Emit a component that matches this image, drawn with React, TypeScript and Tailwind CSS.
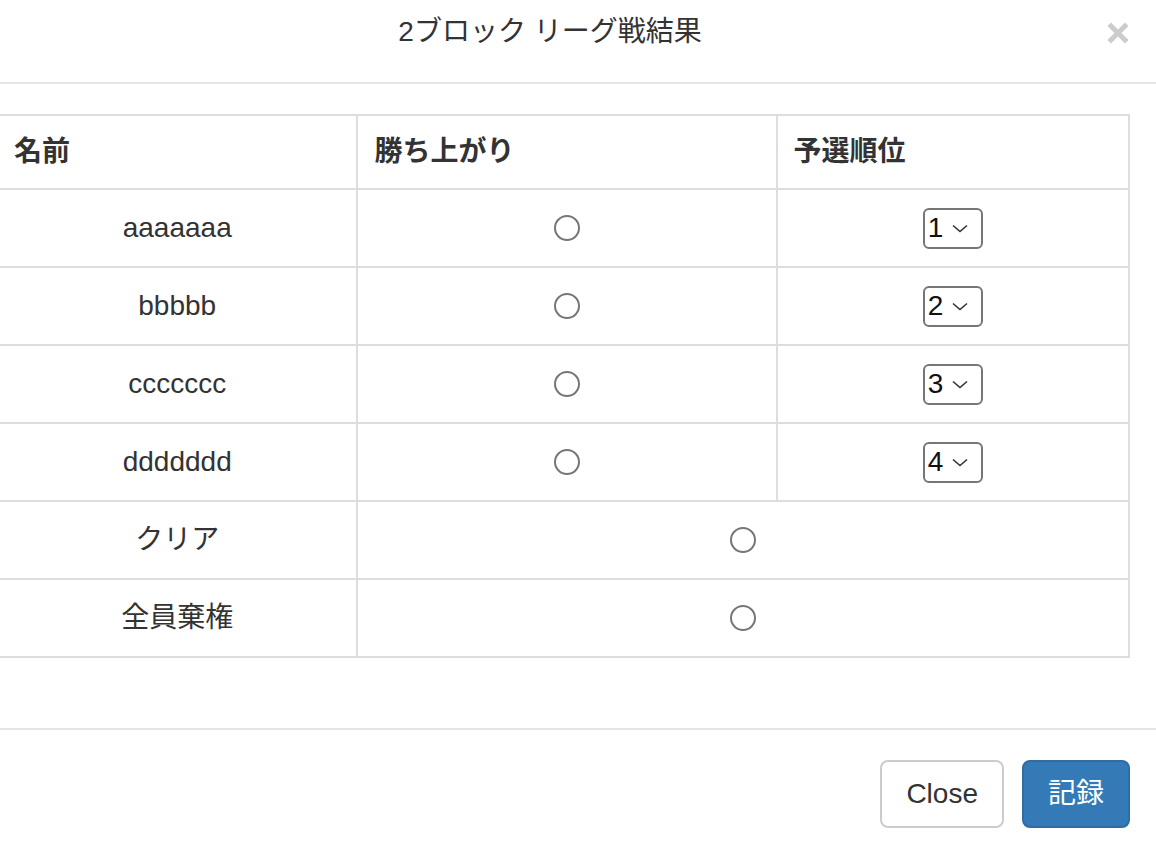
const players = [
  { name: "aaaaaaa", rank: 1 },
  { name: "bbbbb", rank: 2 },
  { name: "ccccccc", rank: 3 },
  { name: "ddddddd", rank: 4 },
];

function Radio() {
  return <span className="inline-block w-[26px] h-[26px] rounded-full border-2 border-[#767676] bg-white" />;
}

function RankSelect({ value }: { value: number }) {
  return (
    <div className="inline-flex items-center w-[60px] h-[41px] border-2 border-[#767676] rounded-[6px] pl-[3px] bg-white">
      <span className="text-[28px] leading-none text-[#111]">{value}</span>
      <svg className="ml-[8px]" width="18" height="10" viewBox="0 0 18 10" fill="none">
        <path d="M2 2.5 L9 8.5 L16 2.5" stroke="#333" strokeWidth="1.6" />
      </svg>
    </div>
  );
}

export default function App() {
  const cell = "border-2 border-[#ddd] px-[16px] py-[16px]";
  return (
    <div className="w-[1156px] h-[846px] overflow-hidden bg-white text-[#333] font-['Liberation_Sans','Noto_Sans_CJK_JP',sans-serif]">
      <div className="ml-[-34px] mt-[-18px] w-[1194px]">
        {/* header */}
        <div className="flex items-center p-[30px] border-b-2 border-[#e5e5e5]">
          <h4 className="flex-1 text-center text-[28px] leading-[40px] font-normal">2ブロック リーグ戦結果</h4>
          <button className="w-[26px] h-[40px] flex items-center justify-end">
            <svg className="mt-[2px]" width="24" height="24" viewBox="0 0 24 24">
              <path d="M5 5 L19 19 M19 5 L5 19" stroke="#cccccc" strokeWidth="5" strokeLinecap="square" />
            </svg>
          </button>
        </div>

        {/* body */}
        <div className="p-[30px]">
          <table className="w-[1134px] mb-[40px] text-[28px] leading-[40px]">
            <colgroup>
              <col className="w-[361px]" />
              <col className="w-[420px]" />
              <col className="w-[353px]" />
            </colgroup>
            <thead>
              <tr>
                <th className={`${cell} text-left font-bold`}>名前</th>
                <th className={`${cell} text-left font-bold`}>勝ち上がり</th>
                <th className={`${cell} text-left font-bold`}>予選順位</th>
              </tr>
            </thead>
            <tbody>
              {players.map((p) => (
                <tr key={p.name}>
                  <td className={`${cell} text-center`}>
                    <div className="h-[44px] flex items-center justify-center">{p.name}</div>
                  </td>
                  <td className={`${cell} text-center`}>
                    <div className="h-[44px] flex items-center justify-center"><Radio /></div>
                  </td>
                  <td className={`${cell} text-center`}>
                    <div className="h-[44px] flex items-center justify-center"><RankSelect value={p.rank} /></div>
                  </td>
                </tr>
              ))}
              {["クリア", "全員棄権"].map((label) => (
                <tr key={label}>
                  <td className={`${cell} text-center`}>
                    <div className="h-[44px] flex items-center justify-center">{label}</div>
                  </td>
                  <td colSpan={2} className={`${cell} text-center`}>
                    <div className="h-[44px] flex items-center justify-center"><Radio /></div>
                  </td>
                </tr>
              ))}
            </tbody>
          </table>
        </div>

        {/* footer */}
        <div className="flex justify-end gap-[18px] p-[30px] border-t-2 border-[#e5e5e5]">
          <button className="h-[68px] px-[24px] border-2 border-[#ccc] rounded-[8px] bg-white text-[28px] leading-[40px] text-[#333]">Close</button>
          <button className="h-[68px] px-[24px] border-2 border-[#2e6da4] rounded-[8px] bg-[#337ab7] text-[28px] leading-[40px] text-white">記録</button>
        </div>
      </div>
    </div>
  );
}
